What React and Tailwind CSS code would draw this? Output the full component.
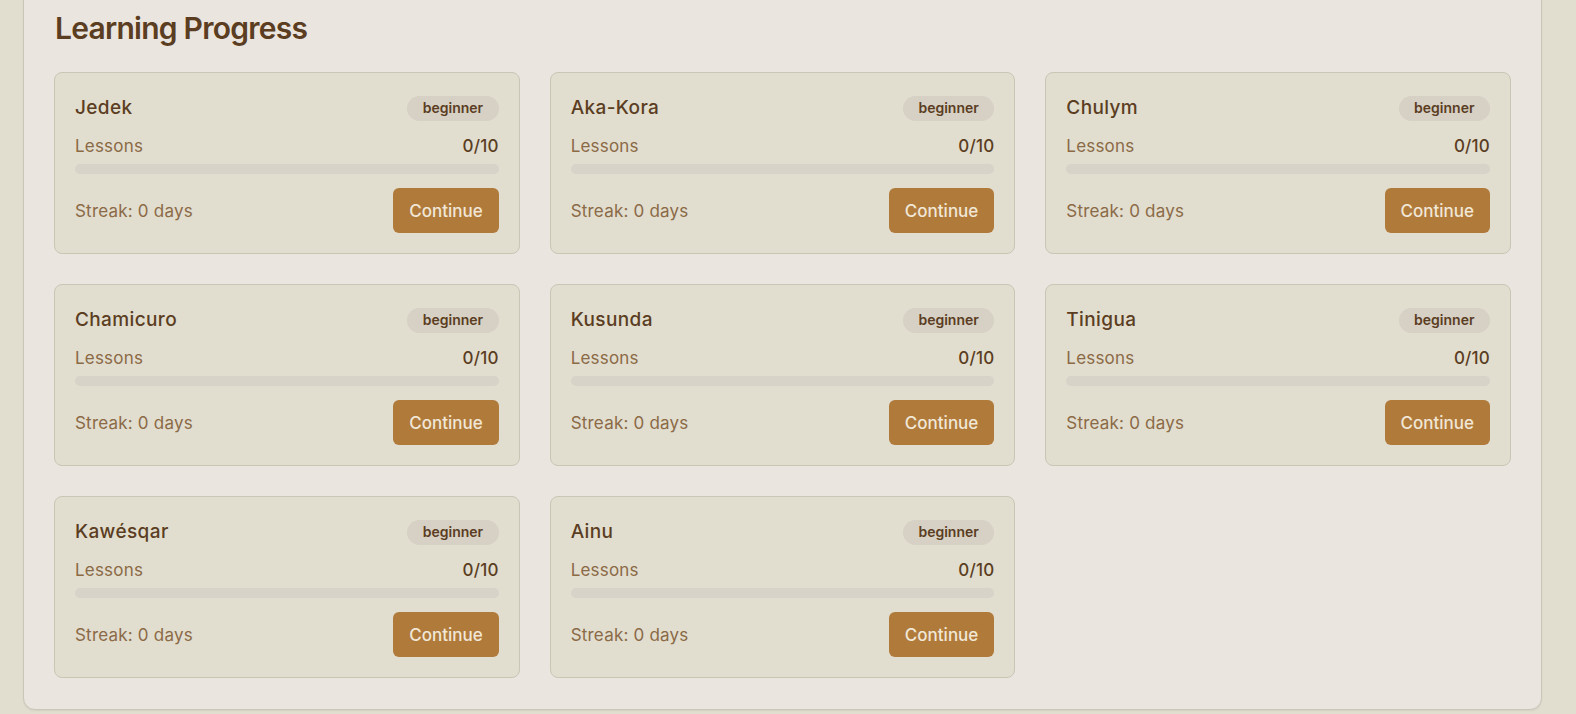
import React from "react";

const langs = ["Jedek", "Aka-Kora", "Chulym", "Chamicuro", "Kusunda", "Tinigua", "Kawésqar", "Ainu"];

function Card({ name }) {
  return (
    <div className="rounded-lg border border-[#cbc5b6] bg-[#e1ddcf] px-5 pt-[21px] pb-5">
      <div className="mb-3 flex items-center justify-between">
        <span className="text-[19px] leading-7 font-medium tracking-[0.02em] text-[#5b3d22]">{name}</span>
        <span className="rounded-full bg-[#d6d0c5] px-[15.5px] py-[2.5px] text-sm leading-5 font-semibold text-[#5b3d22]">beginner</span>
      </div>
      <div className="mb-1.5 flex items-center justify-between text-[17px] leading-6 tracking-[0.012em]">
        <span className="text-[#8b6a46]">Lessons</span>
        <span className="font-medium text-[#5b3d22]">0/10</span>
      </div>
      <div className="h-[10px] w-full rounded-full bg-[#d8d3c8]" />
      <div className="mt-[14px] flex items-center justify-between">
        <span className="text-[17px] leading-6 tracking-[0.012em] text-[#8b6a46]">Streak: 0 days</span>
        <button className="flex h-[45px] items-center rounded-md bg-[#b07a3b] px-4 text-[17px] leading-6 font-medium text-[#f1e7d6]">Continue</button>
      </div>
    </div>
  );
}

export default function App() {
  return (
    <div className="min-h-[714px] overflow-hidden bg-[#e1ddcf] font-['Inter','Liberation_Sans',sans-serif]">
      <div className="ml-[23px] mt-[-21px] w-[1519px] rounded-xl border border-[#cbc5b6] bg-[#eae6df] px-[30px] pt-[30px] pb-[31px] shadow-[0_1px_2px_rgba(0,0,0,0.06)]">
        <h2 className="mb-[26px] pl-px text-3xl leading-9 font-semibold tracking-tight text-[#5b3d22]">Learning Progress</h2>
        <div className="grid grid-cols-3 gap-[30px]">
          {langs.map((l) => (
            <Card key={l} name={l} />
          ))}
        </div>
      </div>
    </div>
  );
}
